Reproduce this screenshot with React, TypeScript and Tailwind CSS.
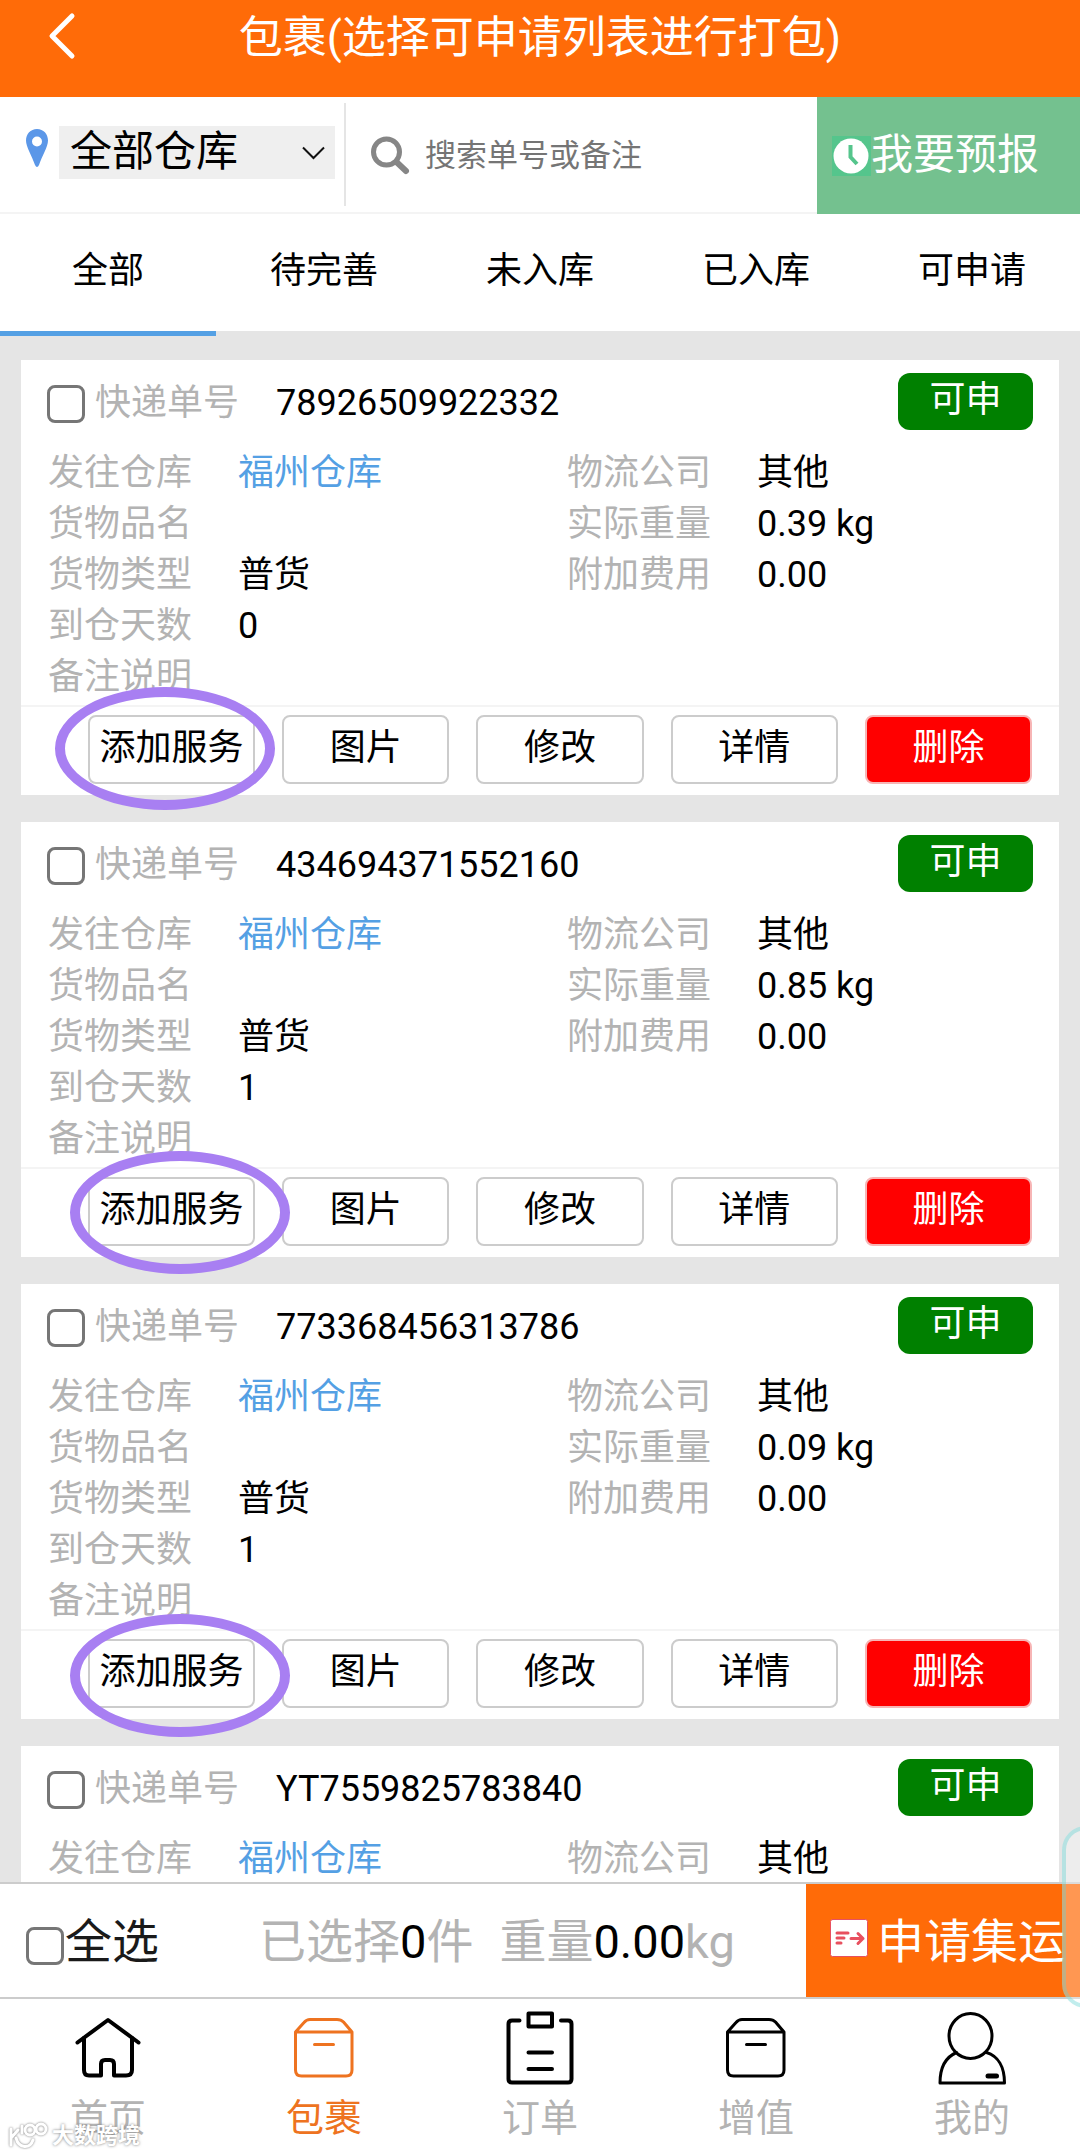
import React from "react";

type Parcel = {
  no: string;
  weight?: string;
  days?: string;
  ring?: string;
};

const parcels: Parcel[] = [
  { no: "78926509922332", weight: "0.39 kg", days: "0", ring: "left-[34px] top-[327px]" },
  { no: "434694371552160", weight: "0.85 kg", days: "1", ring: "left-[49px] top-[329px]" },
  { no: "773368456313786", weight: "0.09 kg", days: "1", ring: "left-[49px] top-[330px]" },
  { no: "YT7559825783840" },
];

const tabs = ["全部", "待完善", "未入库", "已入库", "可申请"];

const checkboxClass =
  "size-[38px] shrink-0 appearance-none rounded-lg border-[3px] border-[#767676] bg-white checked:bg-[#54a0e4]";

function Field({ label, value, blue }: { label: string; value?: string; blue?: boolean }) {
  return (
    <div className="flex h-[51px]">
      <dt className="w-[190px] text-[#b3b3b3]">{label}</dt>
      <dd className={blue ? "text-[#54a0e4]" : "text-black"}>{value}</dd>
    </div>
  );
}

function Card({ parcel }: { parcel: Parcel }) {
  const loaded = parcel.weight !== undefined;
  return (
    <article className="relative bg-white text-[36px] leading-[51px]">
      <div className="flex h-[88px] items-start pr-[26px] pl-[26px]">
        <label className="flex items-center pt-[18px] text-[#b3b3b3]">
          <input type="checkbox" className={checkboxClass + " mr-[10px]"} />
          快递单号
        </label>
        <span className="pt-[18px] pl-[37px]">{parcel.no}</span>
        <span className="mt-[13px] ml-auto h-[57px] w-[135px] rounded-xl bg-[#008000] text-center leading-[54px] text-white">
          可申
        </span>
      </div>
      <div className="flex pb-[2px] pl-[27px]">
        <dl className="w-[519px]">
          <Field label="发往仓库" value="福州仓库" blue />
          {loaded && (
            <>
              <Field label="货物品名" />
              <Field label="货物类型" value="普货" />
              <Field label="到仓天数" value={parcel.days} />
              <Field label="备注说明" />
            </>
          )}
        </dl>
        <dl className="flex-1">
          <Field label="物流公司" value="其他" />
          {loaded && (
            <>
              <Field label="实际重量" value={parcel.weight} />
              <Field label="附加费用" value="0.00" />
            </>
          )}
        </dl>
      </div>
      {loaded && (
        <div className="grid grid-cols-5 gap-[27px] border-t-2 border-[#f4f4f4] pt-2 pr-[27px] pb-[11px] pl-[67px]">
          {["添加服务", "图片", "修改", "详情"].map((name) => (
            <button
              key={name}
              type="button"
              className="h-[69px] rounded-lg border-2 border-[#cccccc] bg-white pb-[2px] whitespace-nowrap"
            >
              {name}
            </button>
          ))}
          <button
            type="button"
            className="h-[69px] rounded-lg border-2 border-[#f7b5b5] bg-[#ff0000] pb-[2px] text-white"
          >
            删除
          </button>
        </div>
      )}
      {parcel.ring && (
        <span
          className={
            "pointer-events-none absolute h-[123px] w-[220px] rounded-[50%] border-[10px] border-[#a87ff2] " +
            parcel.ring
          }
        />
      )}
    </article>
  );
}

function BoxIcon() {
  return (
    <>
      <path d="M11.5 24 L20 14.500 Q22.500 11.500 26 11.500 H53 Q57 11.500 59.500 14 L68 24 V62 Q68 68 62 68 H17.500 Q11.500 68 11.500 62 Z M11.500 24 H68" />
      <path d="M30.500 36.500 H49.500" />
    </>
  );
}

const navItems = [
  {
    label: "首页",
    width: 4,
    icon: (
      <>
        <path d="M9.500 34.500 L40 12 L70.500 34.500" />
        <path d="M16 30 V62 Q16 67.500 21 67.500 H33 V56 Q33 52 37 52 H42 Q46 52 46 56 V67.500 H58 Q64 67.500 64 62 V30" />
      </>
    ),
  },
  { label: "包裹", width: 3, active: true, icon: <BoxIcon /> },
  {
    label: "订单",
    width: 4,
    icon: (
      <>
        <path d="M19.500 12.500 H12 Q8.500 12.500 8.500 16 V71 Q8.500 74.500 12 74.500 H68 Q71.500 74.500 71.500 71 V16 Q71.500 12.500 68 12.500 H61" />
        <path d="M28.500 5.500 H52 V18.500 H28.500 Z M28.500 44.500 H52 M28.500 61 H52" />
      </>
    ),
  },
  { label: "增值", width: 3, icon: <BoxIcon /> },
  {
    label: "我的",
    width: 3,
    icon: (
      <>
        <ellipse cx="38.500" cy="28" rx="21.500" ry="22.500" />
        <path d="M24.500 44.500 C14 49 8 59 8 75 H72.500 C72.500 59 66 48 54.500 44.500" />
        <path d="M56 68 H64.500" strokeWidth="5" />
      </>
    ),
  },
];

export default function App() {
  return (
    <div className="relative flex h-screen flex-col overflow-hidden bg-[#e5e5e5] font-[Roboto,'Noto_Sans_CJK_SC',sans-serif] text-black">
      <header className="relative h-[97px] shrink-0 bg-[#ff6b08] text-white">
        <button type="button" aria-label="返回" className="absolute top-[10px] left-[43px]">
          <svg className="h-[52px] w-[38px]" viewBox="0 0 38 52" fill="none" stroke="currentColor" strokeWidth="5" strokeLinecap="round" strokeLinejoin="round">
            <path d="M29 6 L9 26 L29 46" />
          </svg>
        </button>
        <h1 className="pt-[6px] text-center text-[44px] leading-[64px]">包裹(选择可申请列表进行打包)</h1>
      </header>

      <div className="flex h-[117px] shrink-0 bg-white">
        <div className="flex flex-1 border-b-2 border-[#f4f4f4]">
          <div className="my-[6px] flex w-[346px] items-start border-r-2 border-[#e5e5e5] pt-[23px] pl-[26px]">
            <svg className="mt-[3px] h-[38px] w-[22px] shrink-0" viewBox="0 0 22 38">
              <path fill="#5b97e8" fillRule="evenodd" d="M11 0 C4.500 0 0 5 0 11.500 C0 18 6 27 9 36 Q11 40 13 36 C16 27 22 18 22 11.500 C22 5 17.500 0 11 0 Z M11 7.500 A5 5 0 1 1 11 17.500 A5 5 0 1 1 11 7.500 Z" />
            </svg>
            <div className="relative ml-[11px] w-[276px]">
              <select aria-label="仓库" className="h-[53px] w-full appearance-none bg-[#efefef] px-[11px] pb-[2px] text-[42px] leading-[51px]">
                <option>全部仓库</option>
              </select>
              <svg className="pointer-events-none absolute top-[20px] right-[9px] h-[14px] w-[25px]" viewBox="0 0 25 14" fill="none" stroke="#111" strokeWidth="2">
                <path d="M2 1.500 L12.500 12 L23 1.500" />
              </svg>
            </div>
          </div>
          <label className="flex flex-1 items-center pl-[24px]">
            <svg className="h-[40px] w-[40px] shrink-0" viewBox="0 0 40 40" fill="none" stroke="#868686" strokeLinecap="round">
              <circle cx="16.500" cy="17" r="13" strokeWidth="5" />
              <path d="M27 27.500 L36 36" strokeWidth="6" />
            </svg>
            <input
              type="text"
              aria-label="搜索"
              placeholder="搜索单号或备注"
              className="ml-[15px] h-[60px] w-0 flex-1 pt-[2px] text-[31px] outline-none placeholder:text-[#757575] placeholder:opacity-100"
            />
          </label>
        </div>
        <button type="button" className="flex w-[263px] items-center bg-[#74c18f] pl-[15px] text-[42px] leading-[60px] whitespace-nowrap text-white">
          <svg className="h-[40px] w-[39px] shrink-0" viewBox="0 0 39 40">
            <rect width="39" height="40" fill="#55c58c" />
            <circle cx="19" cy="20" r="17.500" fill="#fff" />
            <path d="M18.500 9 V21 L25 28" fill="none" stroke="#55c58c" strokeWidth="4" />
          </svg>
          <span className="pb-[2px]">我要预报</span>
        </button>
      </div>

      <nav className="grid h-[117px] shrink-0 grid-cols-5 bg-white text-[36px]">
        {tabs.map((tab, i) => (
          <button key={tab} type="button" className="relative pb-[4px]">
            {tab}
            {i === 0 && <span className="absolute inset-x-0 -bottom-[5px] h-[5px] bg-[#54a0e4]" />}
          </button>
        ))}
      </nav>

      <main className="flex min-h-0 flex-1 flex-col gap-[27px] overflow-hidden px-[21px] pt-[29px]">
        {parcels.map((p) => (
          <Card key={p.no} parcel={p} />
        ))}
      </main>

      <div className="flex h-[115px] shrink-0 border-t-2 border-[#cccccc] bg-white text-[47px] leading-[68px] whitespace-nowrap">
        <label className="flex items-start pt-[24px] pl-[26px] text-[#1a1a1a]">
          <input type="checkbox" className={checkboxClass + " mt-[19px] mr-[1px]"} />
          全选
        </label>
        <p className="flex-1 pt-[24px] pl-[100px] text-[#b3b3b3]">
          已选择<span className="text-black">0</span>件
          <span className="pl-[26px]">
            重量<span className="text-black">0.00</span>kg
          </span>
        </p>
        <button type="button" className="flex w-[274px] items-start bg-[#ff6b08] pt-[24px] pl-[24px] text-white">
          <svg className="mt-[11px] mr-[9px] size-[38px] shrink-0" viewBox="0 0 38 38" fill="none" stroke="#e8505f" strokeLinecap="round" strokeLinejoin="round" strokeWidth="3">
            <rect x="0.500" y="0.500" width="37" height="37" rx="2" fill="#fff" strokeWidth="1" />
            <path d="M7 14 H18 M7 19 H14 M7 24 H11 M21 19.500 H33 M28 14.500 L33 19.500 L28 24.500" />
          </svg>
          申请集运
        </button>
      </div>

      <nav className="grid h-[159px] shrink-0 grid-cols-5 border-t-2 border-[#cccccc] bg-white text-[38px] leading-[56px]">
        {navItems.map((item) => (
          <a
            key={item.label}
            href="#"
            className={"flex flex-col items-center gap-[2px] pt-[9px] " + (item.active ? "text-[#ee7320]" : "text-black")}
          >
            <svg className="size-[80px] shrink-0" viewBox="0 0 80 80" fill="none" stroke="currentColor" strokeWidth={item.width} strokeLinecap="round" strokeLinejoin="round">
              {item.icon}
            </svg>
            <span className={item.active ? "" : "text-[#b3b3b3]"}>{item.label}</span>
          </a>
        ))}
      </nav>

      <div className="pointer-events-none absolute -right-[30px] bottom-[148px] h-[182px] w-[48px] rounded-[24px] border-4 border-[#64d2d2]/40 bg-white/30" />

      <div className="pointer-events-none absolute bottom-[5px] left-[8px] flex items-center gap-[4px] text-[22px] leading-[28px] font-bold text-white [text-shadow:0_0_3px_#777]">
        <svg className="h-[30px] w-[40px] drop-shadow-[0_0_1px_#777]" viewBox="0 0 40 30" fill="none" stroke="#fff" strokeWidth="3" strokeLinecap="round">
          <path d="M3 8 V24 M10 9 L4 16 M8 17 C11 28 22 28 25 19" />
          <circle cx="22" cy="9" r="5" />
          <circle cx="33" cy="8" r="5" />
          <path d="M14 5 V12" />
        </svg>
        大数跨境
      </div>
    </div>
  );
}
